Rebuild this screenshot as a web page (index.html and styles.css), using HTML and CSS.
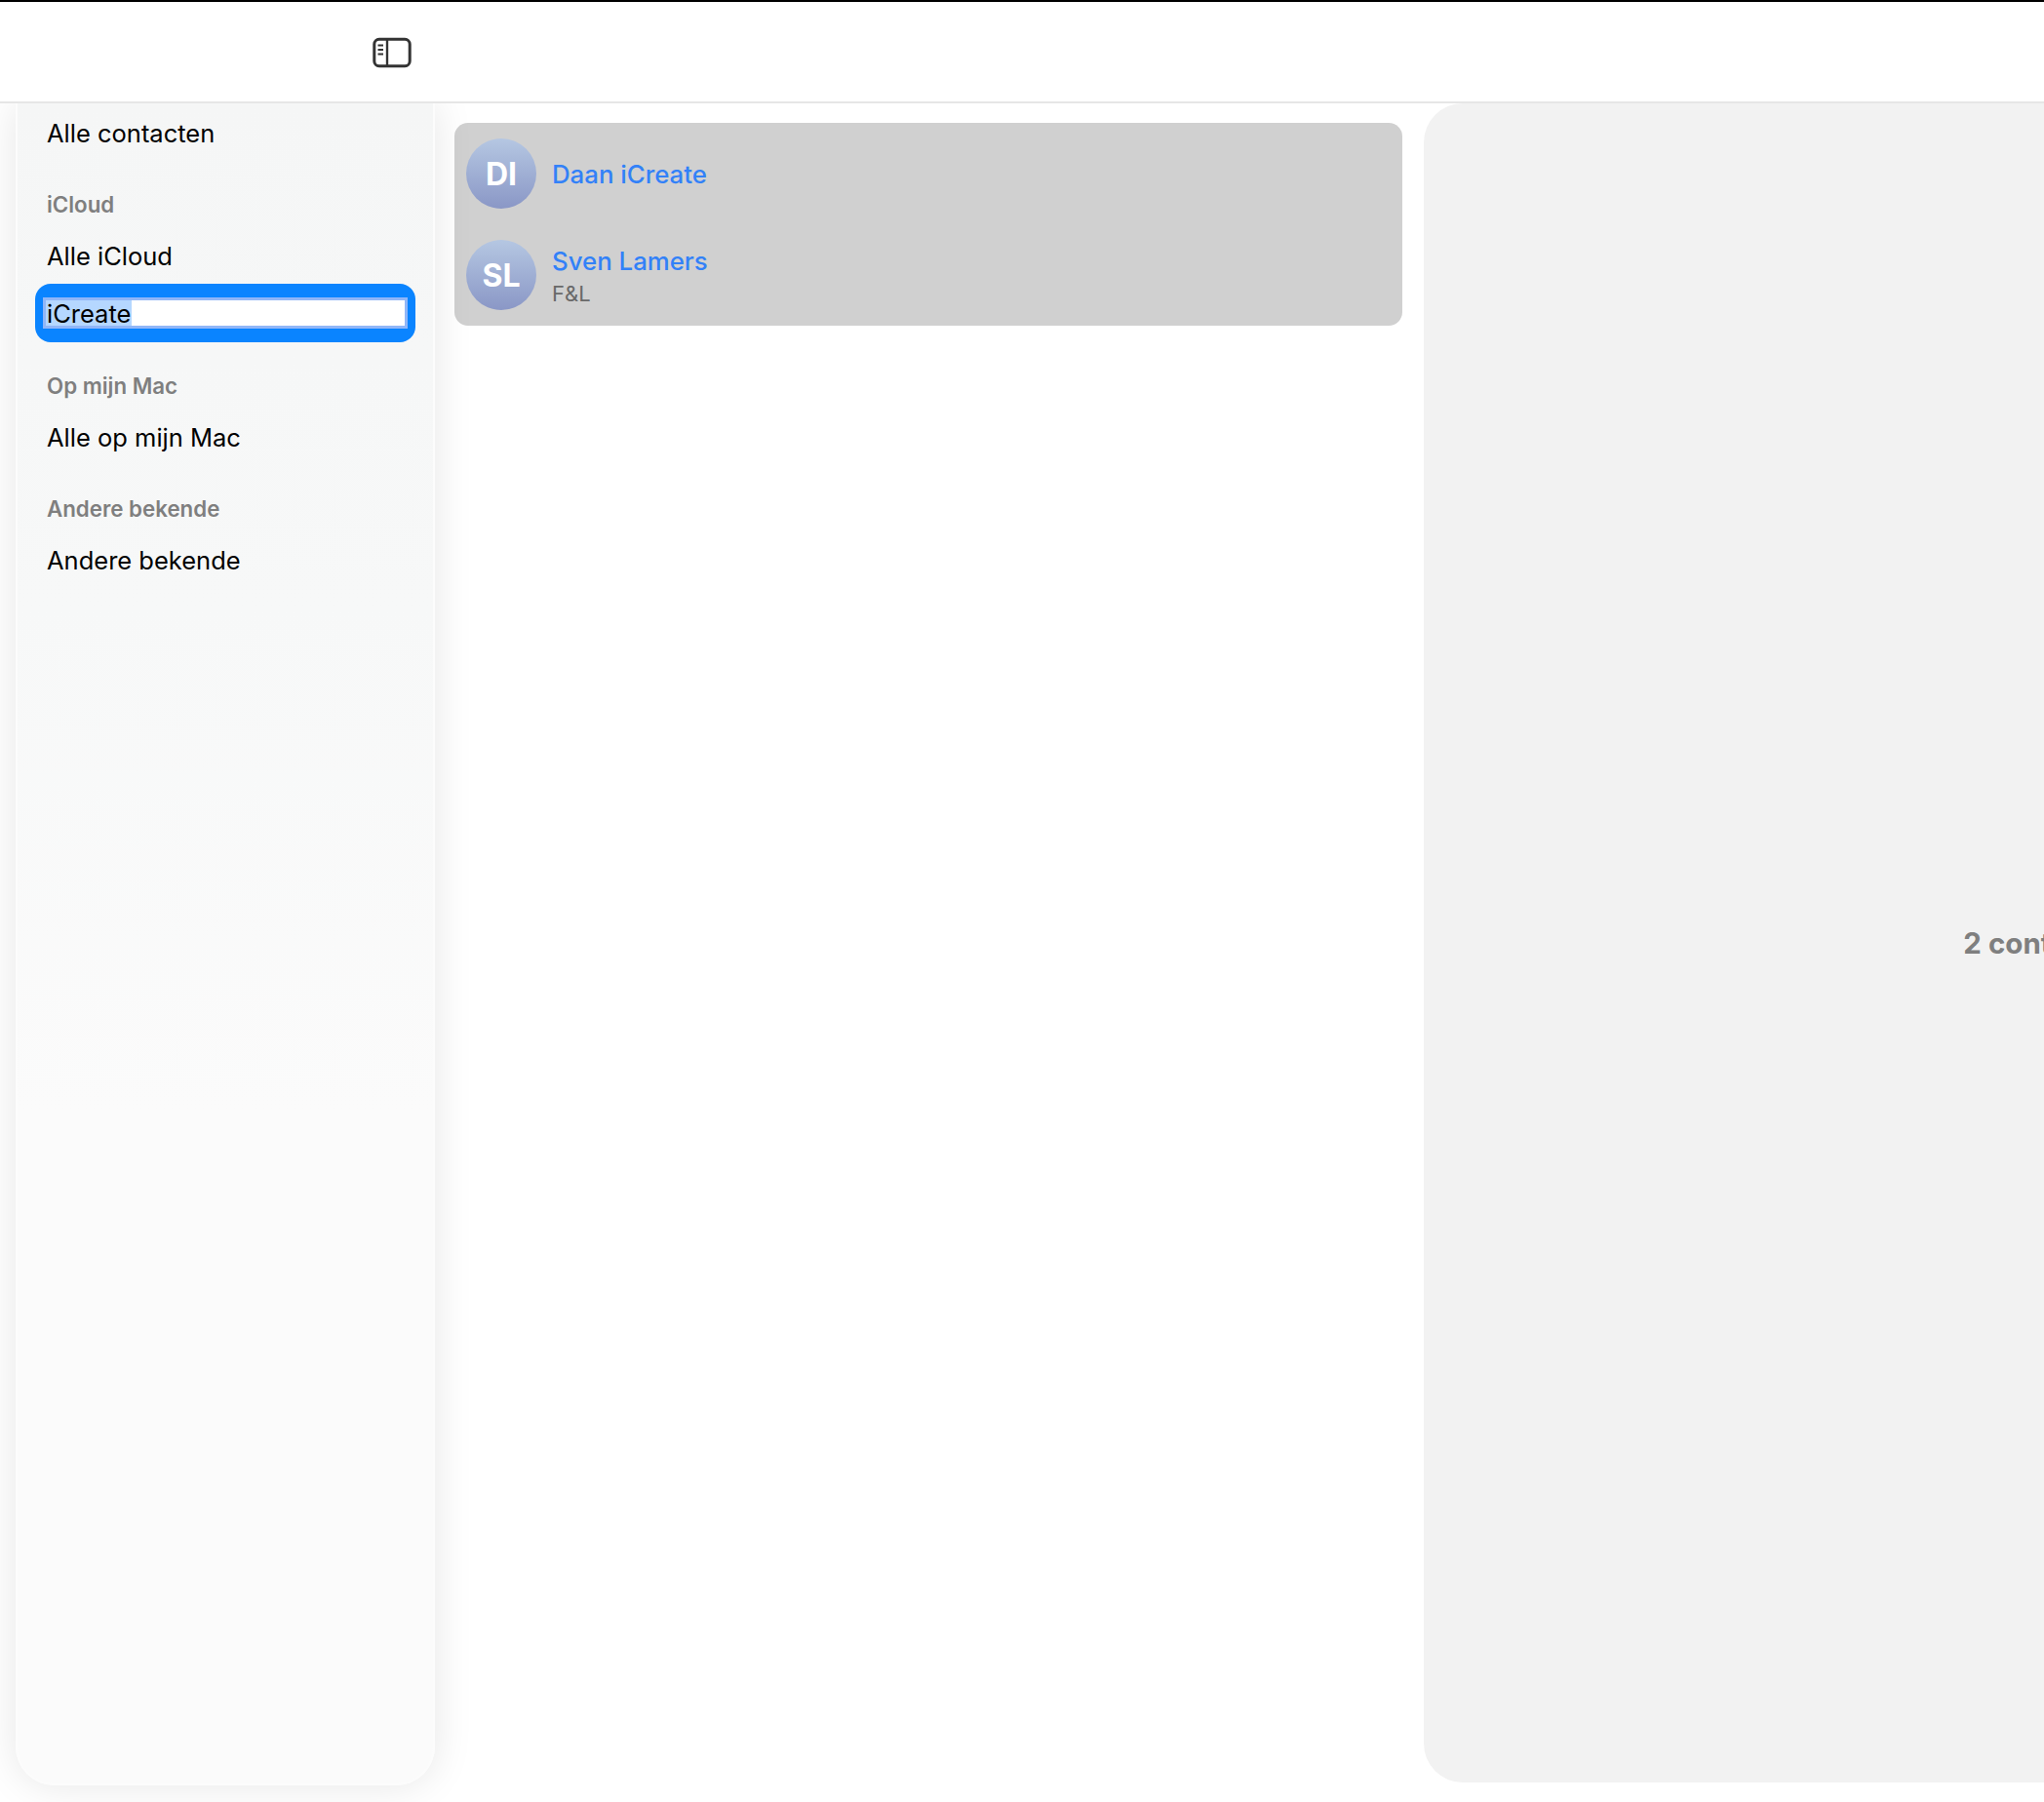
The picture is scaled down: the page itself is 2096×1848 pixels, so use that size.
FILE: index.html
```html
<!DOCTYPE html>
<html lang="nl">
<head>
<meta charset="utf-8">
<title>Contacten</title>
<link rel="stylesheet" href="styles.css">
</head>
<body>
<div class="app">
  <header class="toolbar">
    <svg class="toggle" width="40" height="32" viewBox="0 0 40 32" fill="none" stroke="#333" stroke-width="3">
      <rect x="1.800" y="2.300" width="36.400" height="27.400" rx="5"/>
      <path d="M15 2.300V29.700" stroke-width="2.400"/>
      <path d="M5.500 8.500H11M5.500 13H11M5.500 17.500H11" stroke-width="2"/>
    </svg>
  </header>
  <main class="panes">
    <nav class="sidebar">
      <div class="item item-first">Alle contacten</div>
      <div class="label">iCloud</div>
      <div class="item">Alle iCloud</div>
      <div class="editing"><div class="field"><span class="selected">iCreate</span></div></div>
      <div class="label label-after-edit">Op mijn Mac</div>
      <div class="item">Alle op mijn Mac</div>
      <div class="label">Andere bekende</div>
      <div class="item">Andere bekende</div>
    </nav>
    <section class="list">
      <div class="selection">
        <div class="contact">
          <div class="avatar">DI</div>
          <div class="info"><div class="name">Daan iCreate</div></div>
        </div>
        <div class="contact">
          <div class="avatar">SL</div>
          <div class="info"><div class="name">Sven Lamers</div><div class="company">F&amp;L</div></div>
        </div>
      </div>
    </section>
    <section class="detail">2 contacten</section>
  </main>
</div>
</body>
</html>
```
FILE: styles.css
```css
* { box-sizing: border-box; }
html, body { margin: 0; height: 100%; overflow: hidden; background: #fff; }
body { font-family: Inter, "Liberation Sans", sans-serif; color: #000; }
.app { width: 2096px; height: 1848px; border-top: 2px solid #000; display: flex; flex-direction: column; overflow: hidden; }
.toolbar { height: 104px; flex: none; background: #fff; border-bottom: 2px solid #e6e6e6; display: flex; align-items: center; padding-left: 382px; position: relative; z-index: 2; }
.toggle { display: block; margin-top: 1px; }
.panes { flex: 1; min-height: 0; display: flex; align-items: flex-start; padding-left: 16px; }
.sidebar {
  flex: none; width: 430px; height: 1725px; padding: 0 12px;
  background: linear-gradient(#f5f6f6 0, #f7f8f8 30%, #fbfbfb 60%);
  border: 2px solid #fcfcfc; border-top: 0;
  border-radius: 0 0 40px 40px;
  box-shadow: 0 0 40px rgba(0, 0, 0, .1);
  position: relative; z-index: 1;
}
.item { height: 36px; margin-top: 20px; padding-left: 18px; font-size: 25.500px; line-height: 37px; }
.item-first { margin-top: 12px; }
.label { height: 30px; margin-top: 40px; padding-left: 18px; font-size: 22.300px; line-height: 31px; font-weight: 600; color: #7f7f7f; }
.label-after-edit { margin-top: 29px; }
.editing { margin: 11px 6px 0 6px; height: 60px; padding: 14px 8px; background: #0a84ff; border-radius: 16px; }
.field { height: 32px; background: #fff; border: 3px solid #90b6f8; font-size: 25.500px; line-height: 28px; display: flex; }
.selected { background: #b5d7ff; padding-left: 1px; height: 26px; width: 88px; }
.list { flex: none; width: 1014px; height: 100%; padding: 20px 22px 0 20px; }
.selection { height: 208px; background: #d0d0d0; border-radius: 14px; padding: 16px 12px; display: flex; flex-direction: column; gap: 32px; }
.contact { height: 72px; display: flex; align-items: center; gap: 16px; }
.avatar {
  flex: none; width: 72px; height: 72px; border-radius: 50%;
  background: linear-gradient(#b5c7e2, #8a97c6);
  color: #fff; font-size: 32px; font-weight: 700; line-height: 74px; text-align: center;
}
.info { display: flex; flex-direction: column; padding-top: 2px; }
.name { font-size: 25.800px; line-height: 32px; font-weight: 500; color: #3281f8; }
.company { font-size: 22px; line-height: 28px; color: #696969; margin-top: 3px; }
.detail {
  flex: none; width: 1278px; height: 1722px; background: #f2f2f2; border-radius: 40px 0 0 40px;
  display: flex; align-items: center; justify-content: center;
  font-size: 29.500px; font-weight: 700; color: #7f7f7f;
}
```
